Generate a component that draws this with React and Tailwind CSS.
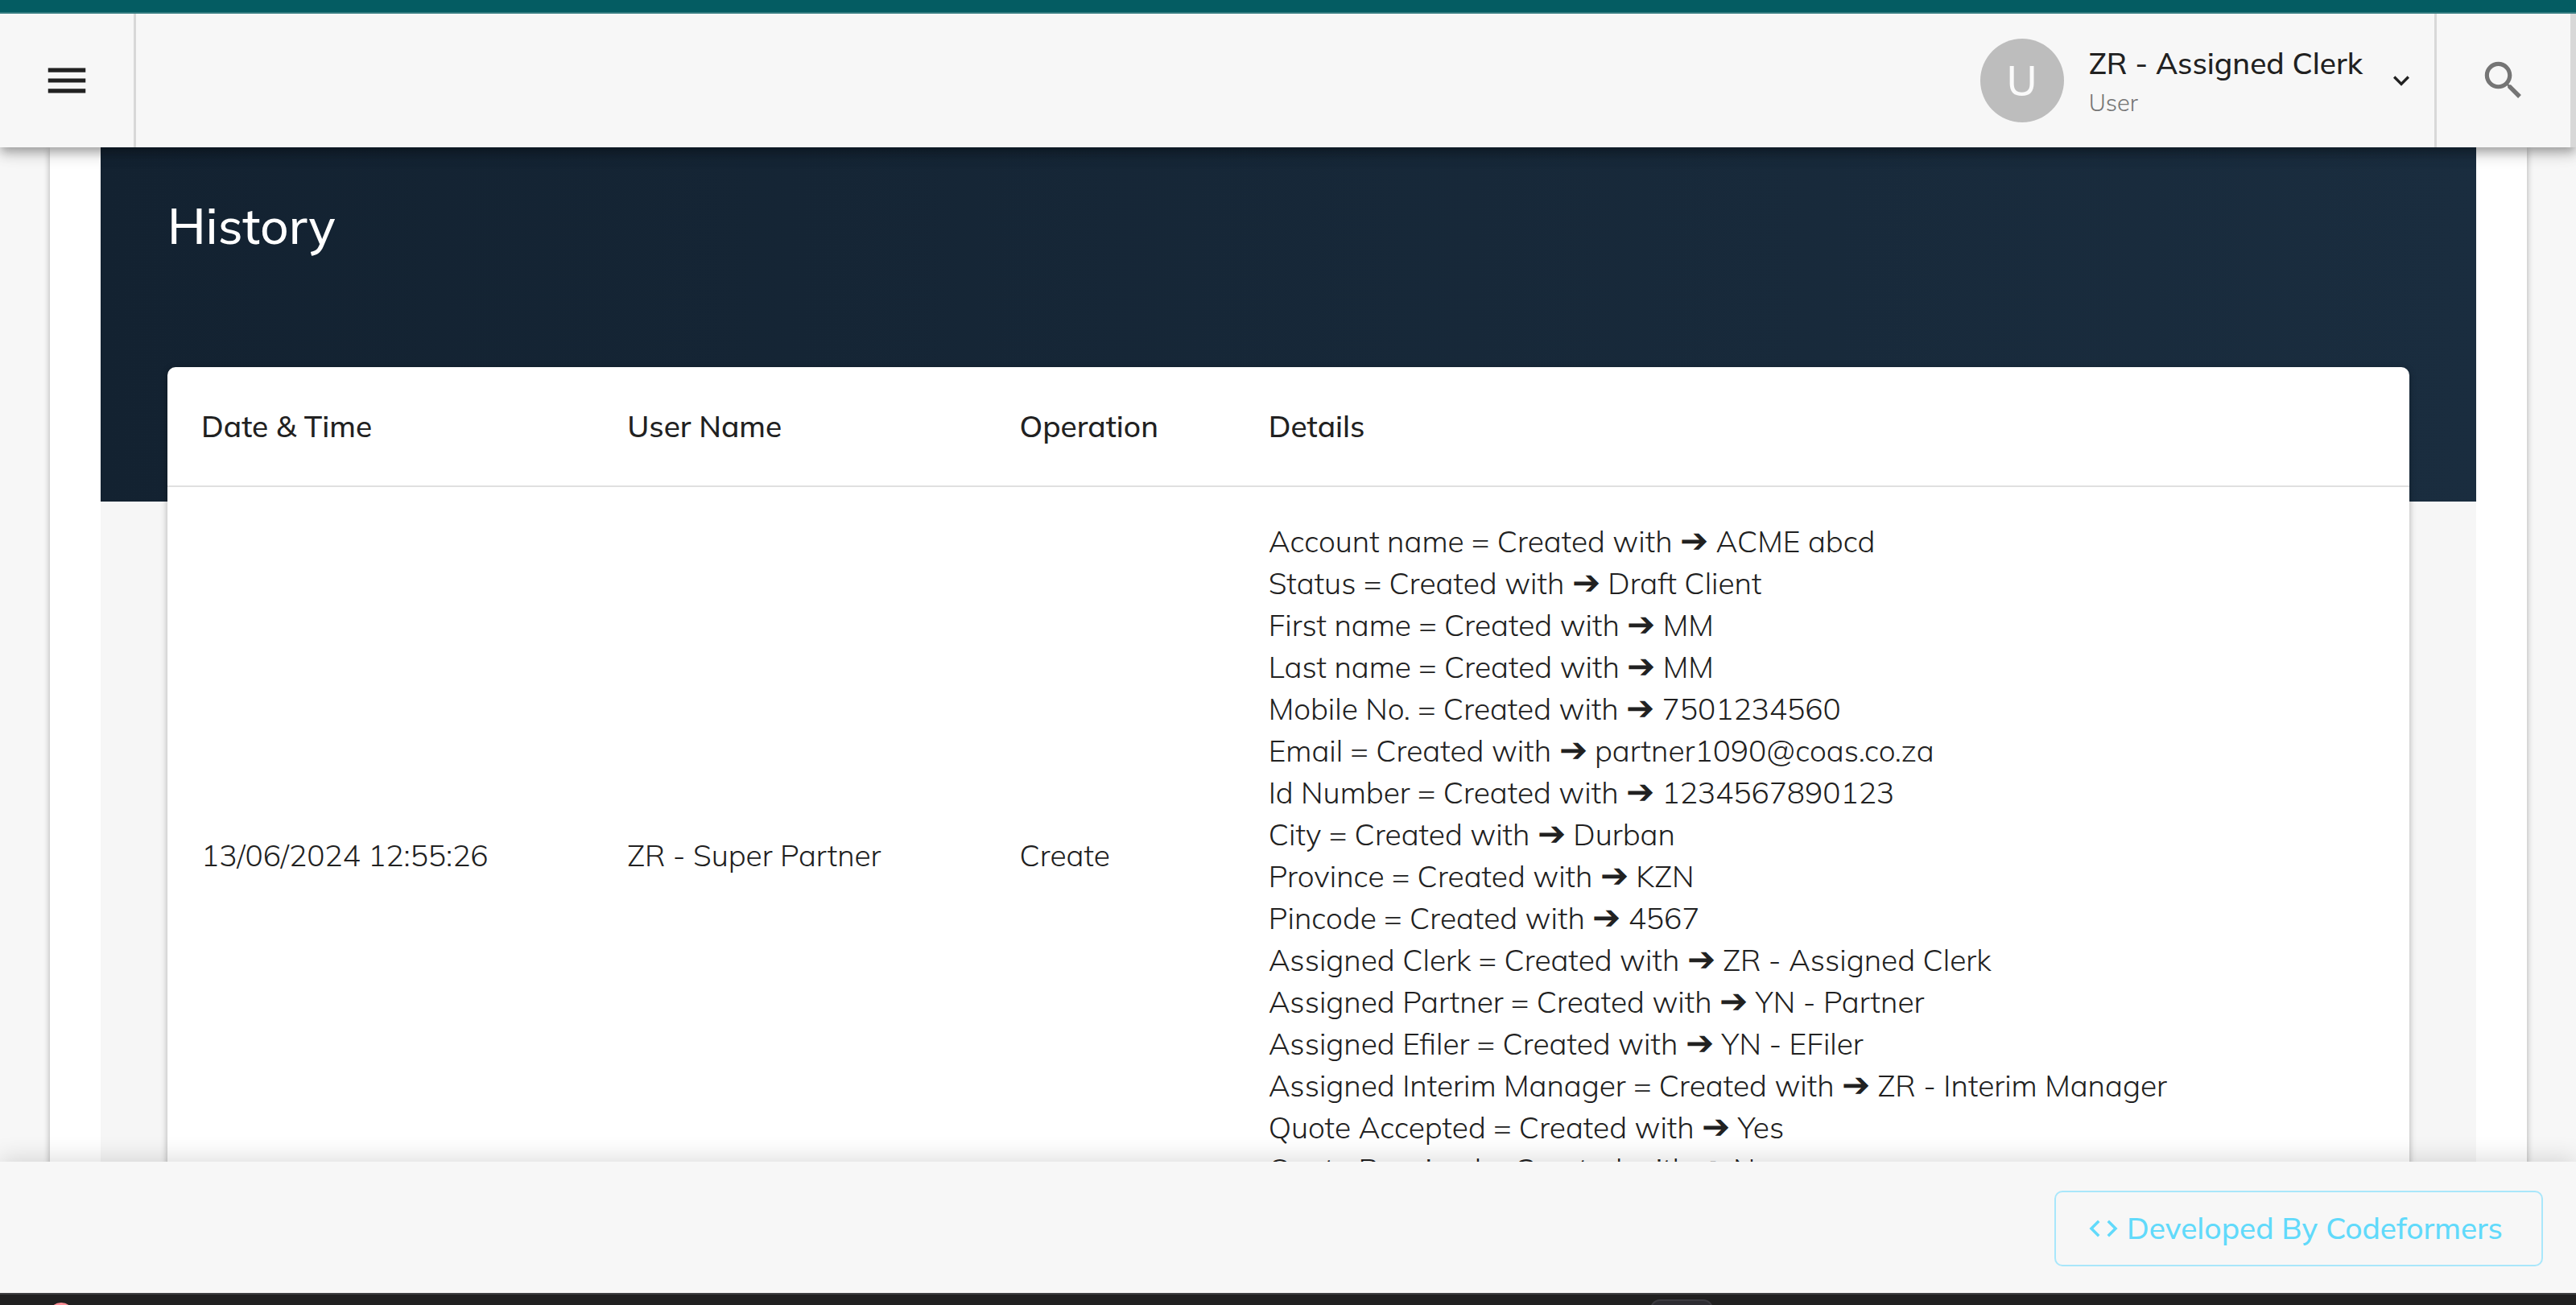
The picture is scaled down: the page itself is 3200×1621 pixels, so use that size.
import React from "react";

const details = [
  ["Account name", "ACME abcd"],
  ["Status", "Draft Client"],
  ["First name", "MM"],
  ["Last name", "MM"],
  ["Mobile No.", "7501234560"],
  ["Email", "partner1090@coas.co.za"],
  ["Id Number", "1234567890123"],
  ["City", "Durban"],
  ["Province", "KZN"],
  ["Pincode", "4567"],
  ["Assigned Clerk", "ZR - Assigned Clerk"],
  ["Assigned Partner", "YN - Partner"],
  ["Assigned Efiler", "YN - EFiler"],
  ["Assigned Interim Manager", "ZR - Interim Manager"],
  ["Quote Accepted", "Yes"],
  ["Quote Received", "No"],
];

function Header() {
  return (
    <header className="relative z-20 flex h-[166px] shrink-0 bg-[#f7f7f7] shadow-[0_6px_10px_-2px_rgba(0,0,0,0.2),0_10px_14px_0_rgba(0,0,0,0.14),0_2px_26px_0_rgba(0,0,0,0.12)]">
      <button
        type="button"
        aria-label="Menu"
        className="flex w-[169px] items-center justify-center border-r-[3px] border-[#d8d8d8]"
      >
        <svg viewBox="0 0 24 24" className="size-[62px] fill-[#212121]">
          <path d="M3 18h18v-2H3v2zm0-5h18v-2H3v2zm0-7v2h18V6H3z" />
        </svg>
      </button>
      <div className="flex-1" />
      <button type="button" className="flex items-center pr-[21px] text-left">
        <span className="flex size-[104px] items-center justify-center rounded-full bg-[#bdbdbd] text-[52px] leading-none font-medium text-[#fafafa]">
          U
        </span>
        <span className="ml-[31px] flex flex-col">
          <span className="text-[37px] font-medium leading-[54px] text-[#212121]">
            ZR - Assigned Clerk
          </span>
          <span className="text-[29px] leading-[44px] text-[#757575]">User</span>
        </span>
        <svg viewBox="0 0 24 24" className="ml-7 size-10 fill-[#212121]">
          <path d="M7.41 8.59L12 13.17l4.59-4.58L18 10l-6 6-6-6 1.41-1.41z" />
        </svg>
      </button>
      <button
        type="button"
        aria-label="Search"
        className="flex w-[176px] items-center justify-center border-x-[3px] border-r-[7px] border-[#d8d8d8]"
      >
        <svg viewBox="0 0 24 24" className="size-[62px] fill-[#757575]">
          <path d="M15.5 14h-.79l-.28-.27C15.41 12.59 16 11.11 16 9.5 16 5.91 13.09 3 9.5 3S3 5.91 3 9.5 5.91 16 9.5 16c1.61 0 3.09-.59 4.23-1.57l.27.28v.79l5 4.99L20.49 19l-4.99-5zm-6 0C7.01 14 5 11.99 5 9.5S7.01 5 9.5 5 14 7.01 14 9.5 11.99 14 9.5 14z" />
        </svg>
      </button>
    </header>
  );
}

function HistoryTable() {
  return (
    <div className="mx-[83px] -mt-[167px] rounded-[10px] bg-white shadow-[0_2px_8px_rgba(0,0,0,0.3)]">
      <table className="w-full table-fixed text-left text-[37px] leading-[52px] text-[#212121]">
        <thead>
          <tr className="h-[148px] border-b-2 border-[#e0e0e0]">
            <th className="w-[19%] px-[42px] pb-0.5 font-medium">Date &amp; Time</th>
            <th className="w-[17.5%] px-[42px] pb-0.5 font-medium">User Name</th>
            <th className="w-[11.1%] px-[42px] pb-0.5 font-medium">Operation</th>
            <th className="px-[42px] pb-0.5 font-medium">Details</th>
          </tr>
        </thead>
        <tbody>
          <tr className="border-b-2 border-[#e0e0e0]">
            <td className="px-[42px] pt-[41px] pb-[42px]">13/06/2024 12:55:26</td>
            <td className="px-[42px] pt-[41px] pb-[42px]">ZR - Super Partner</td>
            <td className="px-[42px] pt-[41px] pb-[42px]">Create</td>
            <td className="px-[42px] pt-[41px] pb-[42px]">
              <ul>
                {details.map(([field, value]) => (
                  <li key={field}>
                    {field} = Created with <span className="text-[42px] leading-none">➔</span> {value}
                  </li>
                ))}
              </ul>
            </td>
          </tr>
        </tbody>
      </table>
    </div>
  );
}

function Footer() {
  return (
    <footer className="relative z-10 flex h-[163px] shrink-0 items-center justify-end bg-[#f7f7f7] pt-0.5 pr-[41px] shadow-[0_-4px_28px_rgba(0,0,0,0.14)]">
      <a
        href="#codeformers"
        className="flex h-[94px] items-center gap-2 rounded-[10px] border-2 border-[#a9e7fb] pr-12 pl-[38px] text-[37px] font-medium text-[#61dafb]"
      >
        <svg viewBox="0 0 24 24" className="size-[42px] fill-current">
          <path d="M9.4 16.6L4.8 12l4.6-4.6L8 6l-6 6 6 6 1.4-1.4zm5.2 0l4.6-4.6-4.6-4.6L16 6l6 6-6 6-1.4-1.4z" />
        </svg>
        Developed By Codeformers
      </a>
    </footer>
  );
}

export default function App() {
  return (
    <div className="flex h-screen flex-col overflow-hidden bg-[#f7f7f7] font-[Mulish,'Noto_Sans',sans-serif] font-[350]">
      <div className="relative z-30 h-[17px] shrink-0 border-b-2 border-[#357c81] bg-[#045c62]" />
      <Header />
      <main className="min-h-0 flex-1 overflow-hidden pr-[61px] pl-[62px]">
        <div className="bg-white px-[63px] shadow-[0_2px_8px_rgba(0,0,0,0.3)]">
          <section className="bg-[#f6f6f6] pb-[83px]">
            <div className="h-[440px] bg-linear-to-r from-[#132231] to-[#1a2d3f] px-[83px] pt-[57px]">
              <h1 className="text-[62px] leading-[80px] font-medium text-white">History</h1>
            </div>
            <HistoryTable />
          </section>
        </div>
      </main>
      <Footer />
      <div className="relative z-20 flex h-[15px] shrink-0 items-start justify-between overflow-hidden border-t-2 border-[#3f4042] bg-[#202020] pr-[1072px] pl-[60px]">
        <span className="mt-[10px] size-8 shrink-0 rounded-full bg-[#ff8f96]" />
        <span className="mt-[6px] h-16 w-[78px] shrink-0 rounded-xl border-2 border-[#3c3b40] bg-[#2d2c31]" />
      </div>
    </div>
  );
}
